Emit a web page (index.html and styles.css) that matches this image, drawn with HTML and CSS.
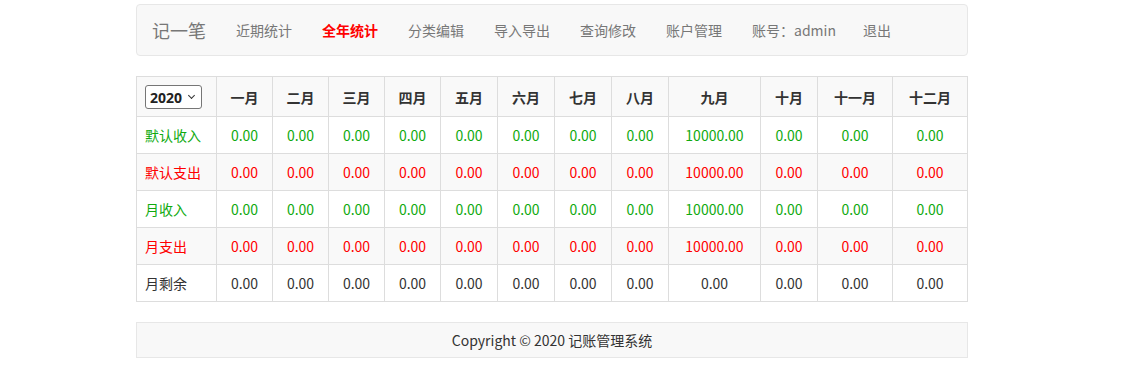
FILE: index.html
```html
<!DOCTYPE html>
<html lang="zh-CN">

<head>
    <meta charset="UTF-8">
    <meta name="viewport" content="width=device-width, initial-scale=1.0">
    <title>记一笔 - 全年统计</title>
    <link rel="stylesheet" href="styles.css">
</head>

<body>
    <div class="page">
        <nav class="navbar">
            <a class="brand" href="#">记一笔</a>
            <ul class="nav-links">
                <li><a href="#">近期统计</a></li>
                <li><a class="active" href="#">全年统计</a></li>
                <li><a href="#">分类编辑</a></li>
                <li><a href="#">导入导出</a></li>
                <li><a href="#">查询修改</a></li>
                <li><a href="#">账户管理</a></li>
                <li><a href="#">账号：admin</a></li>
                <li><a href="#">退出</a></li>
            </ul>
        </nav>

        <table class="year-table">
            <colgroup>
                <col class="col-name">
                <col class="col-s"><col class="col-s"><col class="col-s"><col class="col-s">
                <col class="col-m"><col class="col-m"><col class="col-m"><col class="col-m">
                <col class="col-wide">
                <col class="col-m">
                <col class="col-l"><col class="col-l">
            </colgroup>
            <thead>
                <tr>
                    <th class="name">
                        <span class="select-wrap">
                            <select class="year-select">
                                <option>2020</option>
                                <option>2019</option>
                            </select>
                        </span>
                    </th>
                    <th>一月</th>
                    <th>二月</th>
                    <th>三月</th>
                    <th>四月</th>
                    <th>五月</th>
                    <th>六月</th>
                    <th>七月</th>
                    <th>八月</th>
                    <th>九月</th>
                    <th>十月</th>
                    <th>十一月</th>
                    <th>十二月</th>
                </tr>
            </thead>
            <tbody id="rows"></tbody>
        </table>

        <footer class="footer">Copyright © 2020 记账管理系统</footer>
    </div>

    <script>
        const rows = [
            { name: '默认收入', cls: 'income' },
            { name: '默认支出', cls: 'expense' },
            { name: '月收入', cls: 'income' },
            { name: '月支出', cls: 'expense' },
            { name: '月剩余', cls: 'rest' }
        ];
        const tbody = document.getElementById('rows');

        rows.forEach(row => {
            const tr = document.createElement('tr');
            tr.classList.add(row.cls);

            const nameCell = document.createElement('td');
            nameCell.classList.add('name');
            nameCell.textContent = row.name;
            tr.appendChild(nameCell);

            for (let month = 1; month <= 12; month++) {
                const td = document.createElement('td');
                let value = 0;
                if (month === 9 && row.cls !== 'rest') {
                    value = 10000;
                }
                td.textContent = value.toFixed(2);
                tr.appendChild(td);
            }
            tbody.appendChild(tr);
        });
    </script>
</body>

</html>
```

FILE: styles.css
```css
body {
    margin: 0;
    padding-top: 4px;
    font-family: "Noto Sans CJK SC", "Noto Sans", sans-serif;
    font-size: 14px;
    line-height: 20px;
    color: #333;
    background: #fff;
}

.page {
    width: 832px;
    margin-left: 136px;
}

.navbar {
    display: flex;
    align-items: center;
    height: 50px;
    background-color: #f8f8f8;
    border: 1px solid #e7e7e7;
    border-radius: 4px;
    margin-bottom: 20px;
}

.brand {
    padding: 0 15px;
    font-size: 18px;
    color: #777;
    text-decoration: none;
}

.nav-links {
    list-style-type: none;
    margin: 0;
    padding: 0;
    display: flex;
}

.nav-links a {
    display: block;
    padding: 0 15px;
    color: #777;
    text-decoration: none;
}

.nav-links a.active {
    color: #f00;
    font-weight: bold;
}

.nav-links li:nth-child(7) a {
    padding-right: 12px;
}

.year-table {
    width: 100%;
    table-layout: fixed;
    border-collapse: collapse;
    margin-bottom: 20px;
}

.col-name {
    width: 80px;
}

.col-s {
    width: 56px;
}

.col-m {
    width: 57px;
}

.col-wide {
    width: 92px;
}

.col-l {
    width: 75px;
}

.year-table th,
.year-table td {
    border: 1px solid #ddd;
    padding: 8px;
    text-align: center;
    white-space: nowrap;
}

.year-table th {
    padding: 8px 8px 7px;
    background-color: #f9f9f9;
    font-weight: bold;
}

.year-table .name {
    text-align: left;
}

.year-table tbody tr:nth-child(even) {
    background-color: #f9f9f9;
}

.select-wrap {
    position: relative;
    display: inline-block;
    vertical-align: middle;
}

.select-wrap::after {
    content: "";
    position: absolute;
    right: 8px;
    top: 8px;
    width: 4px;
    height: 4px;
    border-right: 1.5px solid #333;
    border-bottom: 1.5px solid #333;
    transform: rotate(45deg);
    pointer-events: none;
}

.year-select {
    display: block;
    width: 57px;
    height: 24px;
    padding: 0 0 0 4px;
    -webkit-appearance: none;
    appearance: none;
    font-family: "Noto Sans", sans-serif;
    font-size: 14px;
    font-weight: bold;
    color: #222;
    background: #fff;
    border: 1px solid #767676;
    border-radius: 3px;
}

.income td {
    color: #10aa10;
}

.expense td {
    color: #f00;
}

.rest td {
    color: #333;
}

.footer {
    height: 34px;
    line-height: 34px;
    text-align: center;
    background-color: #f8f8f8;
    border: 1px solid #e7e7e7;
    color: #333;
}
```
